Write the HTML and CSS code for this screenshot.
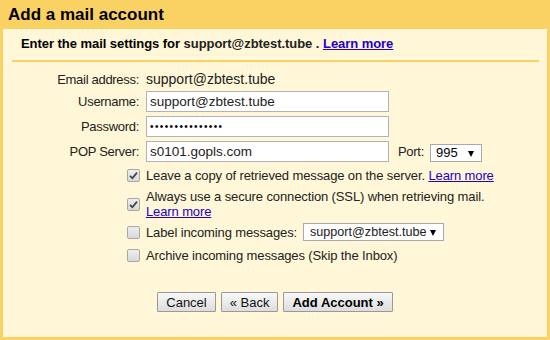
FILE: index.html
```html
<!DOCTYPE html>
<html lang="en">
<head>
    <meta charset="UTF-8">
    <title>Add a mail account</title>
    <link rel="stylesheet" href="styles.css">
</head>
<body>
    <div class="title">Add a mail account</div>

    <div class="panel">
        <div class="panel-head">
            Enter the mail settings for <span class="plain">support@zbtest.tube .</span> <a href="#">Learn more</a>
        </div>

        <div class="form">
            <div class="row row-text">
                <div class="label">Email address:</div>
                <div class="value">support@zbtest.tube</div>
            </div>
            <div class="row">
                <div class="label">Username:</div>
                <div class="input">support@zbtest.tube</div>
            </div>
            <div class="row">
                <div class="label">Password:</div>
                <div class="input password">&bull;&bull;&bull;&bull;&bull;&bull;&bull;&bull;&bull;&bull;&bull;&bull;&bull;&bull;&bull;</div>
            </div>
            <div class="row">
                <div class="label">POP Server:</div>
                <div class="input">s0101.gopls.com</div>
                <span class="port-label">Port:</span>
                <div class="select port">995<span class="arrow"></span></div>
            </div>
        </div>

        <div class="options">
            <div class="check-row">
                <span class="box checked">
                    <svg width="9" height="9" viewBox="0 0 9 9"><path d="M1 4.8 L3.4 7.2 L8 1.6" fill="none" stroke="#444" stroke-width="1.8"/></svg>
                </span>
                <span>Leave a copy of retrieved message on the server. <a href="#">Learn more</a></span>
            </div>
            <div class="check-row">
                <span class="box checked">
                    <svg width="9" height="9" viewBox="0 0 9 9"><path d="M1 4.8 L3.4 7.2 L8 1.6" fill="none" stroke="#444" stroke-width="1.8"/></svg>
                </span>
                <span>Always use a secure connection (SSL) when retrieving mail.<br><a href="#">Learn more</a></span>
            </div>
            <div class="check-row select-row">
                <span class="box"></span>
                <span>Label incoming messages:</span>
                <div class="select label-select">support@zbtest.tube<span class="arrow"></span></div>
            </div>
            <div class="check-row last">
                <span class="box"></span>
                <span>Archive incoming messages (Skip the Inbox)</span>
            </div>
        </div>

        <div class="buttons">
            <button class="btn">Cancel</button>
            <button class="btn">&laquo; Back</button>
            <button class="btn btn-primary">Add Account &raquo;</button>
        </div>
    </div>
</body>
</html>
```

FILE: styles.css
```css
html, body {
    height: 100%;
}
body {
    margin: 0;
    background: #fad163;
    font-family: "Liberation Sans", Arial, sans-serif;
    font-size: 13px;
    color: #222;
    display: flex;
    flex-direction: column;
}
a {
    color: #2200cc;
}
.title {
    height: 29px;
    line-height: 29px;
    padding-left: 8px;
    font-size: 17px;
    font-weight: bold;
    color: #000;
}
.panel {
    flex: 1;
    margin: 0 3px 3px;
    background: #fff7d7;
}
.panel-head {
    margin: 0 8px 0 9px;
    padding: 7px 9px 9px;
    line-height: 15px;
    font-weight: bold;
    color: #000;
    letter-spacing: -0.05px;
    border-bottom: 2px solid #fad163;
}
.panel-head .plain {
    color: #222;
}
.form {
    margin: 10px 0 0 9px;
}
.row {
    display: flex;
    align-items: center;
    margin-top: 4px;
}
.row-text {
    margin-top: 0;
    line-height: 15px;
}
.label {
    width: 127px;
    margin-right: 7px;
    text-align: right;
    letter-spacing: -0.3px;
}
.value {
    font-size: 14px;
    color: #222;
}
.input {
    box-sizing: border-box;
    width: 243px;
    height: 21px;
    line-height: 19px;
    padding-left: 3px;
    background: #fff;
    border: 1px solid #b3b3b3;
    font-size: 13.5px;
    color: #222;
}
.password {
    font-size: 10px;
    letter-spacing: 1.4px;
    color: #000;
}
.port-label {
    margin-left: 9px;
    margin-right: 6px;
    letter-spacing: -0.3px;
}
.select {
    box-sizing: border-box;
    position: relative;
    height: 18px;
    line-height: 16px;
    padding-left: 5px;
    background: #fff;
    border: 1px solid #a9a9a9;
    color: #000;
}
.port {
    width: 52px;
    margin-top: 2px;
}
.arrow {
    position: absolute;
    top: 6px;
    right: 7px;
    width: 0;
    height: 0;
    border-left: 3px solid transparent;
    border-right: 3px solid transparent;
    border-top: 6px solid #000;
}
.options {
    margin: 6px 0 0 124px;
    letter-spacing: -0.12px;
}
.check-row {
    display: flex;
    align-items: center;
    margin-top: 6px;
    line-height: 15px;
}
.select-row {
    margin-top: 4px;
}
.check-row.last {
    margin-top: 7px;
}
.box {
    box-sizing: border-box;
    flex: none;
    width: 13px;
    height: 13px;
    margin-right: 6px;
    border: 1px solid #a8a8a8;
    border-radius: 2px;
    background: linear-gradient(#eeeeee, #d8d8d8);
    display: flex;
    align-items: center;
    justify-content: center;
}
.label-select {
    width: 141px;
    margin-left: 6px;
    padding-left: 6px;
    font-size: 12.6px;
    letter-spacing: 0;
    color: #222;
}
.buttons {
    display: flex;
    justify-content: center;
    gap: 5px;
    margin-top: 29px;
}
.btn {
    height: 20px;
    padding: 0 8px;
    font-family: "Liberation Sans", Arial, sans-serif;
    font-size: 13px;
    color: #111;
    background: linear-gradient(#f8f8f8, #dddddd);
    border: 1px solid #999;
    border-radius: 1px;
}
.btn-primary {
    font-weight: bold;
    color: #000;
}
```
